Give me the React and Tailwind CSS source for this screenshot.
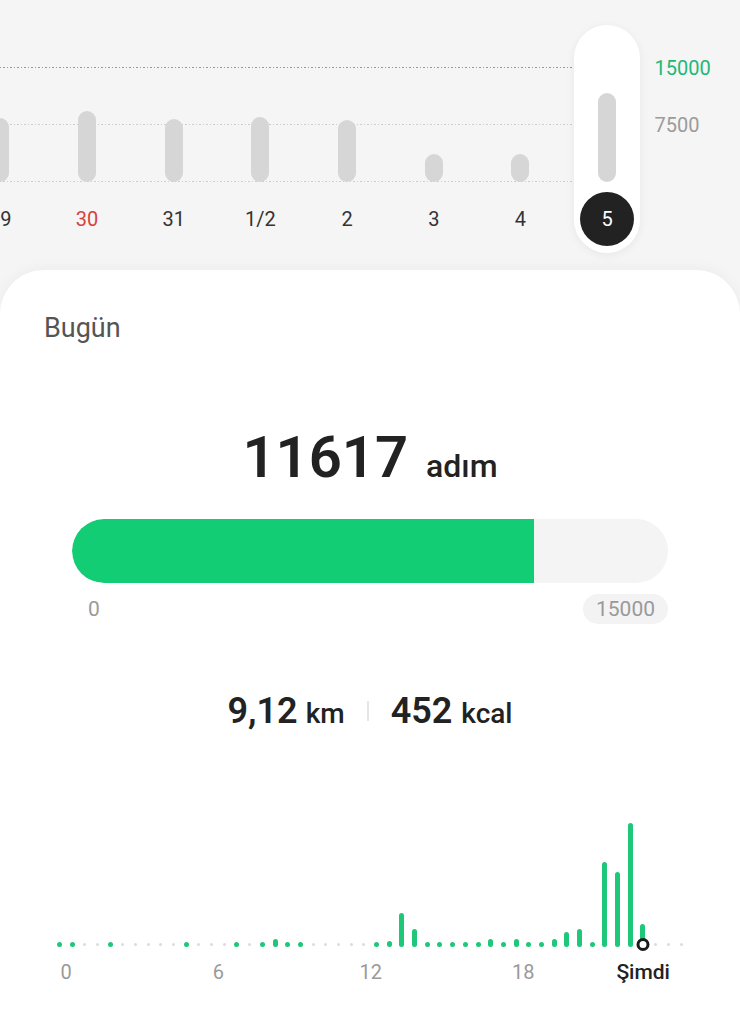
const days = [
    { label: '29', h: 64 },
    { label: '30', h: 71, red: true },
    { label: '31', h: 63 },
    { label: '1/2', h: 65 },
    { label: '2', h: 62 },
    { label: '3', h: 28 },
    { label: '4', h: 28 },
    { label: '5', h: 89, active: true },
]

// half-hour slots: 'g' = empty (gray dot), number = green bar height
const slots = [
    5, 5, 'g', 'g', 5, 'g', 'g', 'g', 'g', 'g',
    5, 'g', 'g', 'g', 5, 'g', 5, 8, 5, 5,
    'g', 'g', 'g', 'g', 'g', 5, 6, 34, 18, 5,
    5, 5, 5, 5, 8, 5, 8, 5, 5, 8,
    15, 18, 5, 85, 75, 124, 23, 'g', 'g', 'g',
]

const NOW = 46

const App = () => {
    return (
        <div className="min-h-[1024px] bg-[#f5f5f5] font-['Roboto',sans-serif] overflow-hidden">
            {/* week chart */}
            <div className="relative flex h-[270px] items-start">
                <div className="absolute left-0 top-[67px] h-px w-[640px] bg-[repeating-linear-gradient(90deg,#3fc592_0_1.5px,transparent_1.5px_3.5px)]" />
                <div className="absolute left-0 top-[124px] h-px w-[640px] bg-[repeating-linear-gradient(90deg,#cdcdcd_0_1.5px,transparent_1.5px_3.5px)]" />
                <div className="absolute left-0 top-[181px] h-px w-[640px] bg-[repeating-linear-gradient(90deg,#cdcdcd_0_1.5px,transparent_1.5px_3.5px)]" />

                <div className="relative -ml-[43px] flex pt-[25px]">
                    {days.map((d) => (
                        <div key={d.label} className="flex w-[86.7px] justify-center">
                            <div
                                className={
                                    d.active
                                        ? 'flex h-[228px] w-[66px] flex-col items-center rounded-full bg-white shadow-[0_2px_10px_rgba(0,0,0,0.06)]'
                                        : 'flex h-[228px] w-[66px] flex-col items-center'
                                }
                            >
                                <div className="flex h-[157px] items-end">
                                    <div className="w-[18px] rounded-full bg-[#d6d6d6]" style={{ height: d.h }} />
                                </div>
                                <div
                                    className={
                                        d.active
                                            ? 'mt-[10px] flex h-[54px] w-[54px] items-center justify-center rounded-full bg-[#222222] text-[20px] text-white'
                                            : d.red
                                              ? 'mt-[10px] flex h-[54px] w-[54px] items-center justify-center text-[20px] text-[#d8423a]'
                                              : 'mt-[10px] flex h-[54px] w-[54px] items-center justify-center text-[20px] text-[#333333]'
                                    }
                                >
                                    <span className="whitespace-nowrap">{d.label}</span>
                                </div>
                            </div>
                        </div>
                    ))}
                </div>

                <div className="relative flex flex-col pl-[4px] pt-[58px] text-[20px] leading-none">
                    <span className="text-[#22b877]">15000</span>
                    <span className="mt-[37px] text-[#9b9b9b]">7500</span>
                </div>
            </div>

            {/* today card */}
            <div className="min-h-[754px] rounded-t-[44px] bg-white pt-[45px] shadow-[0_-2px_14px_rgba(0,0,0,0.04)]">
                <div className="pl-[44px] text-[27px] leading-none text-[#555555]">Bugün</div>

                <div className="mt-[86px] flex items-baseline justify-center leading-none text-[#222222]">
                    <span className="text-[58px] font-semibold">11617</span>
                    <span className="ml-[18px] text-[32px] font-medium">adım</span>
                </div>

                <div className="mx-[72px] mt-[33px] h-[64px] overflow-hidden rounded-full bg-[#f4f4f4]">
                    <div className="h-full w-[77.5%] rounded-l-full bg-[#13cd74]" />
                </div>

                <div className="mx-[72px] mt-[11px] flex items-center justify-between text-[21px] leading-none text-[#9a9a9a]">
                    <span className="flex h-[30px] items-center pl-[16px]">0</span>
                    <span className="flex h-[30px] items-center rounded-full bg-[#f3f3f3] px-[13px]">15000</span>
                </div>

                <div className="mt-[69px] flex items-baseline justify-center leading-none text-[#222222]">
                    <span className="text-[36px] font-semibold">9,12</span>
                    <span className="ml-[8px] text-[28px] font-medium">km</span>
                    <span className="mx-[22px] h-[20px] w-[2px] self-center bg-[#e6e6e6]" />
                    <span className="text-[36px] font-semibold">452</span>
                    <span className="ml-[9px] text-[28px] font-medium">kcal</span>
                </div>

                {/* hourly chart */}
                <div className="ml-[53px] mt-[88px] flex h-[130px] items-end">
                    {slots.map((s, i) => (
                        <div key={i} className="relative flex w-[12.7px] justify-center items-end">
                            {s === 'g' ? (
                                <div className="mb-[1px] h-[3px] w-[3px] rounded-full bg-[#dcdcdc]" />
                            ) : (
                                <div className="w-[5px] rounded-full bg-[#1fc879]" style={{ height: s }} />
                            )}
                            {i === NOW && (
                                <div className="absolute -bottom-[4px] left-1/2 h-[13px] w-[13px] -translate-x-1/2 rounded-full border-[3px] border-[#1a1a1a] bg-white" />
                            )}
                        </div>
                    ))}
                </div>

                <div className="mt-[15px] flex text-[20px] leading-none text-[#9a9a9a]">
                    <span className="ml-[41px] w-[50px] text-center">0</span>
                    <span className="ml-[102.4px] w-[50px] text-center">6</span>
                    <span className="ml-[102.4px] w-[50px] text-center">12</span>
                    <span className="ml-[102.4px] w-[50px] text-center">18</span>
                    <span className="ml-[65px] w-[60px] text-center text-[21px] font-medium text-[#222222]">Şimdi</span>
                </div>
            </div>
        </div>
    )
}

export default App
